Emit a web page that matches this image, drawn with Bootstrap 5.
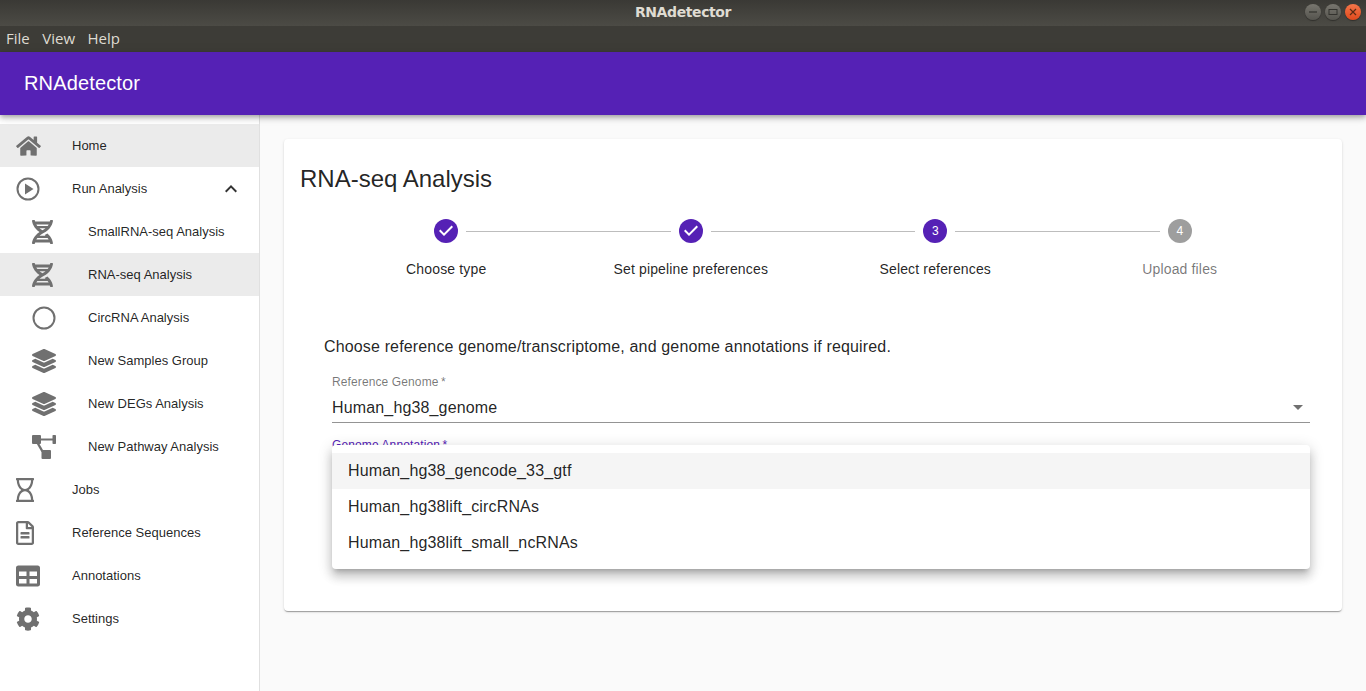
<!doctype html>
<html lang="en">
<head>
<meta charset="utf-8">
<title>RNAdetector</title>
<link href="https://cdn.jsdelivr.net/npm/bootstrap@5.3.0/dist/css/bootstrap.min.css" rel="stylesheet">
<style>
html,body{height:100%;overflow:hidden}
body{font-family:"Liberation Sans",Arial,sans-serif;background:#fafafa;color:rgba(0,0,0,.87)}
.win-title{height:26px;background:linear-gradient(#3a3935,#4c4b45);color:#dfdbd2;font:700 14px/24px "DejaVu Sans",sans-serif;letter-spacing:-.4px}
.win-btn{width:16px;height:16px;border-radius:50%;background:linear-gradient(#78766f,#55544e);box-shadow:0 1px 1px rgba(0,0,0,.35)}
.win-close{background:linear-gradient(#f5764a,#e0491c)}
.win-btns{right:5px;top:4px;gap:4px}
.win-menu{height:26px;background:#3d3c37;color:#dfdbd2;font:15px/24px "Open Sans","Noto Sans",sans-serif;padding-left:6px;gap:12.5px}
.app-bar{height:63px;background:#5521b5;color:#fff;font-size:20px;line-height:63px;letter-spacing:.0075em;padding-left:24px;box-shadow:0 2px 4px -1px rgba(0,0,0,.2),0 4px 5px rgba(0,0,0,.14),0 1px 10px rgba(0,0,0,.12);z-index:2}
.side-nav{width:260px;background:#fff;border-right:1px solid #e0e0e0;padding-top:9px;font-size:13px}
.side-row{height:43px;color:rgba(0,0,0,.87);background:transparent;border:0;border-radius:0}
.side-row.is-on{background:#ebebeb}
.side-ico{width:72px;flex:none;color:#707070;padding-left:16px;display:flex;align-items:center}
.side-sub .side-ico{width:88px;padding-left:32px}
.ico-box{height:24px;display:flex;align-items:center}
.ico-box svg{display:block;fill:currentColor}
.chev-end{margin-right:16px}
.main-wrap{padding:24px}
.step-sheet{height:472px;background:#fff;border-radius:4px;box-shadow:0 2px 1px -1px rgba(0,0,0,.2),0 1px 1px rgba(0,0,0,.14),0 1px 3px rgba(0,0,0,.12);padding:16px}
.sheet-head{font-size:24px;line-height:48px;margin:0;font-weight:400;letter-spacing:0}
.stepper-row{padding:16px 24px 0}
.step-col{flex:1 1 0;text-align:center}
.step-top{height:24px}
.step-line{flex:1 1 0;height:1px;background:#bdbdbd}
.step-gap{flex:1 1 0}
.step-dot{width:24px;height:24px;border-radius:50%;margin:0 8px;background:#5521b5;color:#fff;font-size:12px;line-height:24px;flex:none;display:flex;align-items:center;justify-content:center}
.step-dot.is-off{background:#9e9e9e}
.step-name{font-size:14px;line-height:20px;margin-top:16px;letter-spacing:.01071em}
.step-name.is-off{color:rgba(0,0,0,.54)}
.prompt{margin:56px 0 0 24px;font-size:16px;line-height:24px;letter-spacing:.00938em}
.field-box{margin:0 16px 0 32px;padding-top:16px}
.field-lab{font-size:12px;line-height:14px;color:rgba(0,0,0,.54);letter-spacing:.00938em}
.field-val{height:30px;border-bottom:1px solid rgba(0,0,0,.42);font-size:16px;line-height:28px;letter-spacing:.00938em;margin-top:4px}
.field-lab.is-focus{color:#5521b5;margin-top:15px}
.caret-mark{width:0;height:0;border:5px solid transparent;border-top:5px solid #707070;border-bottom:0;margin-right:7px}
.option-pop{left:0;right:0;top:86px;background:#fff;border-radius:4px;padding:8px 0;z-index:5;box-shadow:0 5px 5px -3px rgba(0,0,0,.2),0 8px 10px 1px rgba(0,0,0,.14),0 3px 14px 2px rgba(0,0,0,.12)}
.option-row{height:36px;line-height:36px;padding-left:16px;font-size:16px;letter-spacing:.00938em}
.option-row.is-on{background:#f5f5f5}
</style>
</head>
<body class="d-flex flex-column">
<div class="win-title position-relative text-center flex-shrink-0">RNAdetector
  <div class="win-btns position-absolute d-flex">
    <span class="win-btn d-flex align-items-center justify-content-center"><svg width="10" height="10" viewBox="0 0 10 10"><path d="M1 5h8" stroke="#33322e" stroke-width="1.2"/></svg></span>
    <span class="win-btn d-flex align-items-center justify-content-center"><svg width="10" height="10" viewBox="0 0 10 10"><rect x="1" y="2.5" width="8" height="5" fill="none" stroke="#33322e"/></svg></span>
    <span class="win-btn win-close d-flex align-items-center justify-content-center"><svg width="10" height="10" viewBox="0 0 10 10"><path d="M2 2l6 6M8 2l-6 6" stroke="#5a2a14" stroke-width="1.2"/></svg></span>
  </div>
</div>
<div class="win-menu d-flex flex-shrink-0"><span>File</span><span>View</span><span>Help</span></div>
<header class="app-bar flex-shrink-0 position-relative">RNAdetector</header>
<div class="d-flex flex-grow-1 overflow-hidden">
  <nav class="side-nav flex-shrink-0">
    <div class="list-group list-group-flush">
      <div class="list-group-item p-0 side-row is-on d-flex align-items-center"><span class="side-ico"><span class="ico-box"><svg width="25" height="22" viewBox="0 0 576 512"><path d="M280.37 148.26L96 300.11V464a16 16 0 0 0 16 16l112.06-.29a16 16 0 0 0 15.92-16V368a16 16 0 0 1 16-16h64a16 16 0 0 1 16 16v95.64a16 16 0 0 0 16 16.05L464 480a16 16 0 0 0 16-16V300L295.67 148.26a12.19 12.19 0 0 0-15.3 0zM571.6 251.47L488 182.56V44.05a12 12 0 0 0-12-12h-56a12 12 0 0 0-12 12v72.61L318.47 43a48 48 0 0 0-61 0L4.34 251.47a12 12 0 0 0-1.6 16.9l25.5 31A12 12 0 0 0 45.15 301l235.22-193.74a12.19 12.19 0 0 1 15.3 0L530.9 301a12 12 0 0 0 16.9-1.6l25.5-31a12 12 0 0 0-1.7-16.93z"/></svg></span></span>Home</div>
      <div class="list-group-item p-0 side-row d-flex align-items-center"><span class="side-ico"><span class="ico-box"><svg width="24" height="24" viewBox="0 0 24 24"><circle cx="12" cy="12" r="10.5" fill="none" stroke="currentColor" stroke-width="2"/><path d="M9 6.500v11l8.500-5.500z"/></svg></span></span><span class="flex-grow-1">Run Analysis</span><svg width="24" height="24" viewBox="0 0 24 24" class="chev-end"><path d="M12 8l-6 6 1.400 1.400L12 10.800l4.600 4.600L18 14z" fill="#333"/></svg></div>
      <div class="list-group-item p-0 side-row side-sub d-flex align-items-center"><span class="side-ico"><span class="ico-box"><svg width="21" height="24" viewBox="0 0 448 512"><path d="M.1 494.1c-1.1 9.5 6.3 17.8 15.9 17.8l32.3.1c8.1 0 14.9-5.9 16-13.9.7-4.9 1.8-11.1 3.4-18.1H380c1.6 6.9 2.7 13.1 3.4 18.1 1.1 8 7.9 14 16 13.9l32.3-.1c9.6 0 17.1-8.3 15.9-17.8-4.6-37.9-25.6-129-118.9-207.7-17.6 12.4-37.1 24.2-58.5 35.4 6.2 4.6 11.4 9.4 17 14.2H159.7c21.3-18.1 47-35.6 78.7-51.4C410.5 199.1 442.1 65.8 447.9 17.9 449 8.4 441.6.1 432 .1L399.6 0c-8.1 0-14.9 5.9-16 13.9-.7 4.9-1.8 11.1-3.4 18.1H67.8c-1.6-7-2.7-13.1-3.4-18.1-1.1-8-7.9-14-16-13.9L16.100.1C6.500.1-1 8.400.1 17.900 5.300 60.800 31.400 171.800 160 256 31.500 340.200 5.300 451.200.1 494.100zM224 219.600c-25.100-13.700-46.400-28.400-64.300-43.600h128.500c-17.800 15.200-39.100 29.900-64.200 43.600zM355.100 96c-5.800 10.400-12.800 21.100-21 32H114c-8.300-10.900-15.200-21.600-21-32h262.100zM92.900 416c5.800-10.400 12.800-21.100 21-32h219.400c8.300 10.900 15.200 21.600 21 32H92.900z"/></svg></span></span>SmallRNA-seq Analysis</div>
      <div class="list-group-item p-0 side-row side-sub is-on d-flex align-items-center"><span class="side-ico"><span class="ico-box"><svg width="21" height="24" viewBox="0 0 448 512"><path d="M.1 494.1c-1.1 9.5 6.3 17.8 15.9 17.8l32.3.1c8.1 0 14.9-5.9 16-13.9.7-4.9 1.8-11.1 3.4-18.1H380c1.6 6.9 2.7 13.1 3.4 18.1 1.1 8 7.9 14 16 13.9l32.3-.1c9.6 0 17.1-8.3 15.9-17.8-4.6-37.9-25.6-129-118.9-207.7-17.6 12.4-37.1 24.2-58.5 35.4 6.2 4.6 11.4 9.4 17 14.2H159.7c21.3-18.1 47-35.6 78.7-51.4C410.5 199.1 442.1 65.8 447.9 17.9 449 8.4 441.6.1 432 .1L399.6 0c-8.1 0-14.9 5.9-16 13.9-.7 4.9-1.8 11.1-3.4 18.1H67.8c-1.6-7-2.7-13.1-3.4-18.1-1.1-8-7.9-14-16-13.9L16.100.1C6.500.1-1 8.400.1 17.900 5.300 60.800 31.400 171.800 160 256 31.500 340.200 5.300 451.200.1 494.100zM224 219.600c-25.100-13.700-46.400-28.400-64.300-43.600h128.500c-17.800 15.200-39.100 29.900-64.200 43.600zM355.100 96c-5.800 10.400-12.800 21.100-21 32H114c-8.300-10.900-15.200-21.600-21-32h262.100zM92.900 416c5.800-10.400 12.800-21.100 21-32h219.400c8.300 10.900 15.200 21.600 21 32H92.900z"/></svg></span></span>RNA-seq Analysis</div>
      <div class="list-group-item p-0 side-row side-sub d-flex align-items-center"><span class="side-ico"><span class="ico-box"><svg width="24" height="24" viewBox="0 0 24 24"><circle cx="12" cy="12" r="10.5" fill="none" stroke="currentColor" stroke-width="2"/></svg></span></span>CircRNA Analysis</div>
      <div class="list-group-item p-0 side-row side-sub d-flex align-items-center"><span class="side-ico"><span class="ico-box"><svg width="24" height="24" viewBox="0 0 512 512"><path d="M12.41 148.02l232.94 105.67c6.8 3.09 14.49 3.09 21.29 0l232.94-105.67c16.55-7.51 16.55-32.52 0-40.03L266.65 2.31a25.607 25.607 0 0 0-21.29 0L12.41 107.98c-16.55 7.51-16.55 32.53 0 40.04zm487.18 88.28l-58.09-26.33-161.64 73.27c-7.56 3.43-15.59 5.17-23.86 5.17s-16.29-1.74-23.86-5.17L70.51 209.97l-58.1 26.33c-16.55 7.5-16.55 32.5 0 40l232.94 105.59c6.8 3.08 14.49 3.08 21.29 0L499.59 276.3c16.55-7.5 16.55-32.5 0-40zm0 127.8l-57.87-26.23-161.86 73.37c-7.56 3.43-15.59 5.17-23.86 5.17s-16.29-1.74-23.86-5.17L70.29 337.87 12.41 364.1c-16.55 7.5-16.55 32.5 0 40l232.94 105.59c6.8 3.08 14.49 3.08 21.29 0L499.59 404.1c16.55-7.5 16.55-32.5 0-40z"/></svg></span></span>New Samples Group</div>
      <div class="list-group-item p-0 side-row side-sub d-flex align-items-center"><span class="side-ico"><span class="ico-box"><svg width="24" height="24" viewBox="0 0 512 512"><path d="M12.41 148.02l232.94 105.67c6.8 3.09 14.49 3.09 21.29 0l232.94-105.67c16.55-7.51 16.55-32.52 0-40.03L266.65 2.31a25.607 25.607 0 0 0-21.29 0L12.41 107.98c-16.55 7.51-16.55 32.53 0 40.04zm487.18 88.28l-58.09-26.33-161.64 73.27c-7.56 3.43-15.59 5.17-23.86 5.17s-16.29-1.74-23.86-5.17L70.51 209.97l-58.1 26.33c-16.55 7.5-16.55 32.5 0 40l232.94 105.59c6.8 3.08 14.49 3.08 21.29 0L499.59 276.3c16.55-7.5 16.55-32.5 0-40zm0 127.8l-57.87-26.23-161.86 73.37c-7.56 3.43-15.59 5.17-23.86 5.17s-16.29-1.74-23.86-5.17L70.29 337.87 12.41 364.1c-16.55 7.5-16.55 32.5 0 40l232.94 105.59c6.8 3.08 14.49 3.08 21.29 0L499.59 404.1c16.55-7.5 16.55-32.5 0-40z"/></svg></span></span>New DEGs Analysis</div>
      <div class="list-group-item p-0 side-row side-sub d-flex align-items-center"><span class="side-ico"><span class="ico-box"><svg width="24" height="24" viewBox="0 0 24 24"><rect x="0" y="0" width="9" height="9" rx="1"/><rect x="20.500" y="0" width="3.500" height="9" rx=".8"/><rect x="9.500" y="15" width="9.500" height="9" rx="1"/><path d="M8 3.500h13v2H8z"/><path d="M5 7l5.500 9.500" fill="none" stroke="currentColor" stroke-width="2.400"/></svg></span></span>New Pathway Analysis</div>
      <div class="list-group-item p-0 side-row d-flex align-items-center"><span class="side-ico"><span class="ico-box"><svg width="18" height="24" viewBox="0 0 384 512"><path d="M368 48h4c6.627 0 12-5.373 12-12V12c0-6.627-5.373-12-12-12H12C5.373 0 0 5.373 0 12v24c0 6.627 5.373 12 12 12h4c0 80.564 32.188 165.807 97.18 208C47.899 298.381 16 383.900 16 464h-4c-6.627 0-12 5.373-12 12v24c0 6.627 5.373 12 12 12h360c6.627 0 12-5.373 12-12v-24c0-6.627-5.373-12-12-12h-4c0-80.564-32.188-165.807-97.180-208C336.102 213.619 368 128.100 368 48zM64 48h256c0 101.620-57.307 184-128 184S64 149.620 64 48zm256 416H64c0-101.620 57.307-184 128-184s128 82.380 128 184z"/></svg></span></span>Jobs</div>
      <div class="list-group-item p-0 side-row d-flex align-items-center"><span class="side-ico"><span class="ico-box"><svg width="18" height="24" viewBox="0 0 384 512"><path d="M288 248v28c0 6.6-5.4 12-12 12H108c-6.6 0-12-5.4-12-12v-28c0-6.6 5.4-12 12-12h168c6.6 0 12 5.4 12 12zm-12 72H108c-6.6 0-12 5.4-12 12v28c0 6.6 5.4 12 12 12h168c6.6 0 12-5.4 12-12v-28c0-6.6-5.4-12-12-12zm108-188.1V464c0 26.5-21.5 48-48 48H48c-26.5 0-48-21.5-48-48V48C0 21.5 21.5 0 48 0h204.1C264.8 0 277 5.1 286 14.1L369.9 98c9 8.9 14.1 21.2 14.1 33.9zm-128-80V128h76.1L256 51.900zM336 464V176H232c-13.3 0-24-10.7-24-24V48H48v416h288z"/></svg></span></span>Reference Sequences</div>
      <div class="list-group-item p-0 side-row d-flex align-items-center"><span class="side-ico"><span class="ico-box"><svg width="24" height="24" viewBox="0 0 512 512"><path d="M464 32H48C21.49 32 0 53.49 0 80v352c0 26.51 21.49 48 48 48h416c26.51 0 48-21.49 48-48V80c0-26.51-21.49-48-48-48zM224 416H64v-96h160v96zm0-160H64v-96h160v96zm224 160H288v-96h160v96zm0-160H288v-96h160v96z"/></svg></span></span>Annotations</div>
      <div class="list-group-item p-0 side-row d-flex align-items-center"><span class="side-ico"><span class="ico-box"><svg width="24" height="24" viewBox="0 0 512 512"><path d="M487.4 315.7l-42.6-24.6c4.3-23.2 4.3-47 0-70.2l42.6-24.6c4.9-2.8 7.1-8.6 5.5-14-11.1-35.6-30-67.8-54.7-94.6-3.8-4.1-10-5.1-14.8-2.3L380.8 110c-17.9-15.4-38.5-27.3-60.8-35.1V25.800c0-5.600-3.900-10.500-9.400-11.700-36.700-8.200-74.300-7.800-109.200 0-5.500 1.200-9.400 6.100-9.400 11.700V75c-22.200 7.900-42.800 19.800-60.800 35.100L88.700 85.500c-4.900-2.800-11-1.900-14.800 2.300-24.700 26.700-43.600 58.900-54.700 94.600-1.700 5.400.6 11.200 5.500 14L67.300 221c-4.300 23.200-4.300 47 0 70.200l-42.600 24.600c-4.900 2.800-7.100 8.600-5.500 14 11.100 35.600 30 67.800 54.700 94.600 3.800 4.100 10 5.100 14.800 2.300l42.600-24.600c17.900 15.400 38.500 27.300 60.800 35.100v49.200c0 5.600 3.900 10.500 9.400 11.700 36.700 8.200 74.300 7.800 109.200 0 5.500-1.200 9.400-6.100 9.400-11.700v-49.200c22.200-7.900 42.800-19.800 60.800-35.100l42.600 24.600c4.900 2.800 11 1.900 14.800-2.300 24.700-26.700 43.600-58.900 54.700-94.600 1.500-5.500-.7-11.300-5.600-14.100zM256 336c-44.100 0-80-35.900-80-80s35.900-80 80-80 80 35.900 80 80-35.900 80-80 80z"/></svg></span></span>Settings</div>
    </div>
  </nav>
  <main class="main-wrap flex-grow-1">
    <section class="step-sheet">
      <h1 class="sheet-head">RNA-seq Analysis</h1>
      <div class="stepper-row d-flex">
        <div class="step-col"><div class="step-top d-flex align-items-center"><span class="step-gap"></span><span class="step-dot"><svg width="24" height="24" viewBox="0 0 24 24"><path d="M10 17l-5-5 1.410-1.410L10 14.170l7.590-7.590L19 8l-9 9z" fill="#fff"/></svg></span><span class="step-line"></span></div><div class="step-name">Choose type</div></div>
        <div class="step-col"><div class="step-top d-flex align-items-center"><span class="step-line"></span><span class="step-dot"><svg width="24" height="24" viewBox="0 0 24 24"><path d="M10 17l-5-5 1.410-1.410L10 14.170l7.590-7.590L19 8l-9 9z" fill="#fff"/></svg></span><span class="step-line"></span></div><div class="step-name">Set pipeline preferences</div></div>
        <div class="step-col"><div class="step-top d-flex align-items-center"><span class="step-line"></span><span class="step-dot">3</span><span class="step-line"></span></div><div class="step-name">Select references</div></div>
        <div class="step-col"><div class="step-top d-flex align-items-center"><span class="step-line"></span><span class="step-dot is-off">4</span><span class="step-gap"></span></div><div class="step-name is-off">Upload files</div></div>
      </div>
      <p class="prompt">Choose reference genome/transcriptome, and genome annotations if required.</p>
      <div class="field-box position-relative">
        <div class="field-lab">Reference Genome&thinsp;*</div>
        <div class="field-val d-flex justify-content-between align-items-center"><span>Human_hg38_genome</span><span class="caret-mark"></span></div>
        <div class="field-lab is-focus">Genome Annotation&thinsp;*</div>
        <div class="option-pop position-absolute">
          <div class="option-row is-on">Human_hg38_gencode_33_gtf</div>
          <div class="option-row">Human_hg38lift_circRNAs</div>
          <div class="option-row">Human_hg38lift_small_ncRNAs</div>
        </div>
      </div>
    </section>
  </main>
</div>
<script src="https://cdn.jsdelivr.net/npm/bootstrap@5.3.0/dist/js/bootstrap.bundle.min.js"></script>
</body>
</html>
